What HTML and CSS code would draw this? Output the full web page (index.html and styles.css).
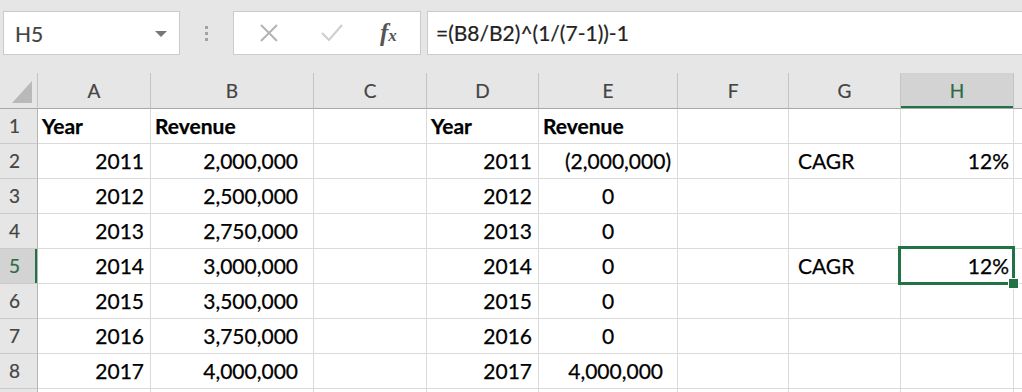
FILE: index.html
```html
<!DOCTYPE html>
<html lang="en">
<head>
    <meta charset="UTF-8">
    <meta name="viewport" content="width=device-width, initial-scale=1.0">
    <title>CAGR - Sheet1</title>
    <link rel="stylesheet" href="styles.css">
</head>
<body>

    <div class="sheet">
        <div class="formula-bar">
            <div class="name-box">
                <span>H5</span>
                <span class="caret"></span>
            </div>
            <div class="grip"><i></i><i></i><i></i></div>
            <div class="fx-box">
                <svg class="cancel" width="20" height="20" viewBox="0 0 20 20">
                    <path d="M2 2 L18 18 M18 2 L2 18" stroke="#b3b3b3" stroke-width="2" fill="none"/>
                </svg>
                <svg class="enter" width="24" height="20" viewBox="0 0 24 20">
                    <path d="M2 10 L9 17 L22 2" stroke="#cfcfcf" stroke-width="2.2" fill="none"/>
                </svg>
                <span class="fx"><i>f</i><i class="x">x</i></span>
            </div>
            <div class="formula">=(B8/B2)^(1/(7-1))-1</div>
        </div>

        <table class="grid">
            <thead>
                <tr>
                    <th class="corner">
                        <svg width="20" height="22" viewBox="0 0 20 22"><polygon points="0,22 20,22 20,0" fill="#b9b9b9"/></svg>
                    </th>
                    <th class="c-a">A</th>
                    <th class="c-b">B</th>
                    <th class="c-c">C</th>
                    <th class="c-d">D</th>
                    <th class="c-e">E</th>
                    <th class="c-f">F</th>
                    <th class="c-g">G</th>
                    <th class="c-h active">H</th>
                    <th class="c-i"></th>
                </tr>
            </thead>
            <tbody>
                <tr>
                    <th>1</th>
                    <td class="label">Year</td>
                    <td class="label">Revenue</td>
                    <td></td>
                    <td class="label">Year</td>
                    <td class="label">Revenue</td>
                    <td></td><td></td><td></td><td></td>
                </tr>
                <tr>
                    <th>2</th>
                    <td class="yr">2011</td>
                    <td class="amt">2,000,000</td>
                    <td></td>
                    <td class="yr">2011</td>
                    <td class="flow">(2,000,000)</td>
                    <td></td>
                    <td class="txt">CAGR</td>
                    <td class="pct">12%</td>
                    <td></td>
                </tr>
                <tr>
                    <th>3</th>
                    <td class="yr">2012</td>
                    <td class="amt">2,500,000</td>
                    <td></td>
                    <td class="yr">2012</td>
                    <td class="zero">0</td>
                    <td></td><td></td><td></td><td></td>
                </tr>
                <tr>
                    <th>4</th>
                    <td class="yr">2013</td>
                    <td class="amt">2,750,000</td>
                    <td></td>
                    <td class="yr">2013</td>
                    <td class="zero">0</td>
                    <td></td><td></td><td></td><td></td>
                </tr>
                <tr>
                    <th class="active">5</th>
                    <td class="yr">2014</td>
                    <td class="amt">3,000,000</td>
                    <td></td>
                    <td class="yr">2014</td>
                    <td class="zero">0</td>
                    <td></td>
                    <td class="txt">CAGR</td>
                    <td class="pct selected">12%</td>
                    <td></td>
                </tr>
                <tr>
                    <th>6</th>
                    <td class="yr">2015</td>
                    <td class="amt">3,500,000</td>
                    <td></td>
                    <td class="yr">2015</td>
                    <td class="zero">0</td>
                    <td></td><td></td><td></td><td></td>
                </tr>
                <tr>
                    <th>7</th>
                    <td class="yr">2016</td>
                    <td class="amt">3,750,000</td>
                    <td></td>
                    <td class="yr">2016</td>
                    <td class="zero">0</td>
                    <td></td><td></td><td></td><td></td>
                </tr>
                <tr>
                    <th>8</th>
                    <td class="yr">2017</td>
                    <td class="amt">4,000,000</td>
                    <td></td>
                    <td class="yr">2017</td>
                    <td class="flow pos">4,000,000</td>
                    <td></td><td></td><td></td><td></td>
                </tr>
                <tr>
                    <th></th>
                    <td></td><td></td><td></td><td></td><td></td><td></td><td></td><td></td><td></td>
                </tr>
            </tbody>
        </table>
    </div>

</body>
</html>
```

FILE: styles.css
```css
* {
    box-sizing: border-box;
}

body {
    margin: 0;
    background: #ffffff;
    font-family: Lato, "Open Sans", sans-serif;
    color: #000;
    overflow: hidden;
}

.sheet {
    width: 1022px;
    height: 392px;
    overflow: hidden;
    background: #e6e6e6;
}

/* formula bar */

.formula-bar {
    display: flex;
    align-items: flex-start;
    height: 73px;
    padding-top: 11px;
}

.name-box {
    display: flex;
    align-items: center;
    justify-content: space-between;
    width: 177px;
    height: 44px;
    margin-left: 3px;
    padding: 0 12px 0 11px;
    background: white;
    border: 1px solid #cbcbcb;
    font-size: 21px;
    color: #444;
    -webkit-text-stroke: 0.2px #444;
}

.caret {
    width: 0;
    height: 0;
    border-left: 6px solid transparent;
    border-right: 6px solid transparent;
    border-top: 6px solid #777;
    margin-top: 1px;
}

.grip {
    width: 53px;
    height: 44px;
    display: flex;
    flex-direction: column;
    align-items: center;
    justify-content: center;
    gap: 3px;
}

.grip i {
    width: 3px;
    height: 3px;
    background: #a3a3a3;
}

.fx-box {
    display: flex;
    align-items: center;
    width: 188px;
    height: 44px;
    padding-left: 25px;
    background: white;
    border: 1px solid #cbcbcb;
}

.fx-box .enter {
    margin-left: 41px;
}

.fx {
    margin-left: 36px;
    font-family: "Liberation Serif", serif;
    font-size: 25px;
    font-weight: bold;
    color: #555;
}

.fx .x {
    font-size: 17px;
}

.formula {
    flex: 1;
    height: 44px;
    margin-left: 6px;
    padding-left: 8px;
    background: white;
    border: 1px solid #cbcbcb;
    border-right: none;
    font-size: 21px;
    line-height: 41px;
    color: #222;
    -webkit-text-stroke: 0.2px #222;
}

/* grid */

.grid {
    table-layout: fixed;
    border-collapse: separate;
    border-spacing: 0;
    width: 1080px;
    background: white;
}

.grid th,
.grid td {
    height: 35px;
    padding: 0;
    line-height: 34px;
    white-space: nowrap;
    border-right: 1px solid #dadada;
    border-bottom: 1px solid #dadada;
    font-size: 21px;
    -webkit-text-stroke: 0.25px #000;
}

.grid thead th {
    height: 36px;
    background: #e6e6e6;
    font-weight: normal;
    font-size: 19px;
    color: #444;
    -webkit-text-stroke: 0.2px #444;
    text-align: center;
    border-right: 1px solid #c4c4c4;
    border-bottom: 1px solid #a8a8a8;
}

.grid tbody th {
    background: #e6e6e6;
    font-weight: normal;
    font-size: 19px;
    color: #444;
    -webkit-text-stroke: 0.2px #444;
    text-align: left;
    padding-left: 9px;
    border-right: 1px solid #b4b4b4;
    border-bottom: 1px solid #cacaca;
}

.grid th.active {
    background: #d3d3d3;
    color: #2b6b45;
    -webkit-text-stroke: 0.2px #2b6b45;
}

.grid thead th.active {
    box-shadow: inset 0 -2px 0 #217346;
}

.grid tbody th.active {
    box-shadow: inset -2px 0 0 #217346;
}

.grid .corner {
    text-align: right;
    vertical-align: bottom;
    padding: 0 5px 5px 0;
    line-height: 0;
}

.c-a { width: 113px; }
.c-b { width: 163px; }
.c-c { width: 113px; }
.c-d { width: 112px; }
.c-e { width: 139px; }
.c-f { width: 111px; }
.c-g { width: 112px; }
.c-h { width: 113px; }
.c-i { width: 67px; }
.corner { width: 38px; }

/* cell formats */

.label {
    font-weight: bold;
    padding-left: 4px !important;
}

.yr {
    text-align: right;
    padding-right: 6px !important;
}

.amt {
    text-align: right;
    padding-right: 15px !important;
}

.flow {
    text-align: right;
    padding-right: 6px !important;
}

.flow.pos {
    padding-right: 14px !important;
}

.zero {
    text-align: center;
}

.txt {
    padding-left: 9px !important;
}

.pct {
    text-align: right;
    padding-right: 4px !important;
}

.selected {
    position: relative;
}

.selected::before {
    content: "";
    position: absolute;
    left: -3px;
    top: -3px;
    right: -2px;
    bottom: -2px;
    border: 3px solid #217346;
}

.selected::after {
    content: "";
    position: absolute;
    right: -6px;
    bottom: -6px;
    width: 9px;
    height: 9px;
    background: #217346;
    border: 1px solid white;
}
```
